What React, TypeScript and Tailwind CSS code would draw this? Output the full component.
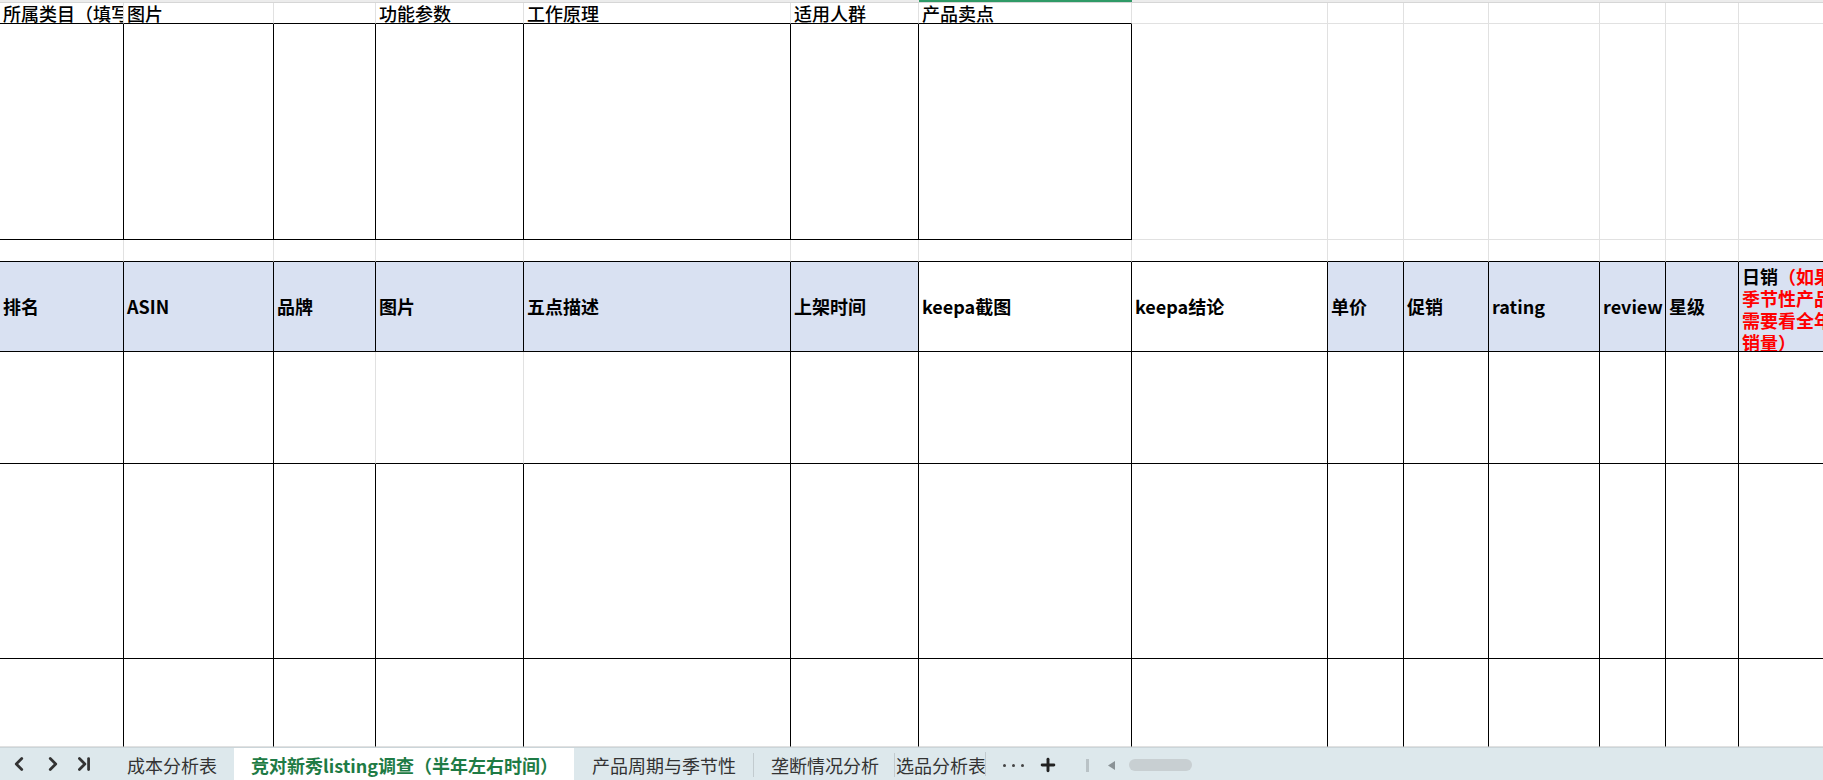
import { ChevronLeft, ChevronRight, ChevronLast, Plus } from 'lucide-react';

const cols =
  'grid grid-cols-[124px_150px_102px_148px_267px_128px_213px_196px_76px_85px_111px_66px_73px_95px]';

type CellProps = {
  right?: 'black' | 'grid';
  bottom?: 'black' | 'grid';
  blue?: boolean;
  className?: string;
  children?: React.ReactNode;
};

function Cell({ right = 'grid', bottom = 'grid', blue, className = '', children }: CellProps) {
  const r = right === 'black' ? 'border-r-black' : 'border-r-[#e1e1e1]';
  const b = bottom === 'black' ? 'border-b-black' : 'border-b-[#e1e1e1]';
  const bg = blue ? 'bg-[#d9e1f2]' : 'bg-white';
  return (
    <div className={`border-r border-b overflow-hidden ${r} ${b} ${bg} ${className}`}>
      {children}
    </div>
  );
}

const topLabels = ['所属类目（填写类目）', '图片', '', '功能参数', '工作原理', '适用人群', '产品卖点'];

const headers = [
  '排名',
  'ASIN',
  '品牌',
  '图片',
  '五点描述',
  '上架时间',
  'keepa截图',
  'keepa结论',
  '单价',
  '促销',
  'rating',
  'review',
  '星级',
];

// header cells that sit on white instead of the blue fill
const whiteHeaders = [6, 7];

export default function App() {
  const all = Array.from({ length: 14 }, (_, i) => i);

  return (
    <div
      className="w-[1823px] h-[780px] overflow-hidden flex flex-col bg-white text-black"
      style={{ fontFamily: '"Noto Sans CJK SC", "Noto Sans", sans-serif' }}
    >
      {/* column header strip, cut off at the top */}
      <div className="h-[3px] flex bg-[#ececec] border-b border-[#d6d6d6]">
        <div className="w-[919px]" />
        <div className="w-[213px] bg-[#2f9a67]" />
      </div>

      {/* row 1: top labels */}
      <div className={`${cols} h-[21px]`}>
        {all.map((i) => (
          <Cell key={i} bottom={i < 7 ? 'black' : 'grid'} className="flex items-end pl-[3px]">
            <span className="whitespace-nowrap text-[18px] leading-[20px] font-medium">
              {topLabels[i] ?? ''}
            </span>
          </Cell>
        ))}
      </div>

      {/* row 2: big empty block */}
      <div className={`${cols} h-[216px]`}>
        {all.map((i) => (
          <Cell key={i} right={i < 7 ? 'black' : 'grid'} bottom={i < 7 ? 'black' : 'grid'} />
        ))}
      </div>

      {/* row 3: spacer */}
      <div className={`${cols} h-[22px]`}>
        {all.map((i) => (
          <Cell key={i} bottom="black" />
        ))}
      </div>

      {/* row 4: competitor table header */}
      <div className={`${cols} h-[90px]`}>
        {headers.map((h, i) => (
          <Cell
            key={i}
            right="black"
            bottom="black"
            blue={!whiteHeaders.includes(i)}
            className="flex items-center pl-[3px]"
          >
            <span className="whitespace-nowrap text-[18px] font-bold">{h}</span>
          </Cell>
        ))}
        <Cell right="black" bottom="black" blue className="pl-[3px] pt-[3px]">
          <div className="text-[18px] font-bold leading-[22px] whitespace-nowrap">
            <div>
              日销<span className="text-[#ff0000]">（如果</span>
            </div>
            <div className="text-[#ff0000]">季节性产品</div>
            <div className="text-[#ff0000]">需要看全年</div>
            <div className="text-[#ff0000]">销量）</div>
          </div>
        </Cell>
      </div>

      {/* row 5 */}
      <div className={`${cols} h-[112px]`}>
        {all.map((i) => (
          <Cell key={i} right={i === 2 || i === 3 ? 'grid' : 'black'} bottom="black" />
        ))}
      </div>

      {/* row 6 */}
      <div className={`${cols} h-[195px]`}>
        {all.map((i) => (
          <Cell key={i} right="black" bottom="black" />
        ))}
      </div>

      {/* row 7, cut off by the sheet tabs */}
      <div className={`${cols} flex-1`}>
        {all.map((i) => (
          <Cell key={i} right="black" bottom="grid" />
        ))}
      </div>

      {/* sheet tab bar */}
      <div className="h-[33px] shrink-0 flex items-stretch bg-[#dde8ec] border-t border-[#cbd5d9] text-[18px] text-[#333]">
        <div className="w-[110px] flex items-center text-[#333]">
          <ChevronLeft size={22} strokeWidth={3} className="ml-[8px]" />
          <ChevronRight size={22} strokeWidth={3} className="ml-[12px]" />
          <ChevronLast size={22} strokeWidth={3} className="ml-[9px]" />
        </div>
        <div className="w-[124px] flex items-center pt-[2px] pl-[17px] whitespace-nowrap">成本分析表</div>
        <div className="w-[340px] flex items-center pt-[2px] pl-[17px] bg-white text-[#1e7b45] font-bold whitespace-nowrap">
          竞对新秀listing调查（半年左右时间）
        </div>
        <div className="flex items-center pt-[2px] pl-[18px] whitespace-nowrap">
          <span>产品周期与季节性</span>
          <span className="ml-[17px] h-[24px] w-px bg-[#c2cbcf]" />
        </div>
        <div className="flex items-center pt-[2px] pl-[17px] whitespace-nowrap">
          <span>垄断情况分析</span>
          <span className="ml-[15px] h-[24px] w-px bg-[#c2cbcf]" />
        </div>
        <div className="w-[91px] pl-[1px] pt-[2px] flex items-center overflow-hidden whitespace-nowrap border-r border-[#c2cbcf] my-[4px]">
          选品分析表
        </div>
        <div className="flex items-center gap-[6px] ml-[17px] pt-[3px]">
          <span className="h-[3px] w-[3px] rounded-full bg-[#444]" />
          <span className="h-[3px] w-[3px] rounded-full bg-[#444]" />
          <span className="h-[3px] w-[3px] rounded-full bg-[#444]" />
        </div>
        <div className="flex items-center ml-[14px] pt-[2px]">
          <Plus size={20} strokeWidth={3.5} className="text-[#222]" />
        </div>
        <div className="flex items-center ml-[28px] pt-[2px]">
          <span className="h-[13px] w-[3px] bg-[#b9c2c6]" />
        </div>
        <div className="flex items-center ml-[19px] pt-[2px]">
          <svg width="7" height="9" viewBox="0 0 7 9">
            <path d="M7 0 L0 4.5 L7 9 Z" fill="#8a9296" />
          </svg>
        </div>
        <div className="flex items-center ml-[14px] pt-[2px]">
          <span className="h-[12px] w-[63px] rounded-full bg-[#c8cfd2]" />
        </div>
      </div>
    </div>
  );
}
